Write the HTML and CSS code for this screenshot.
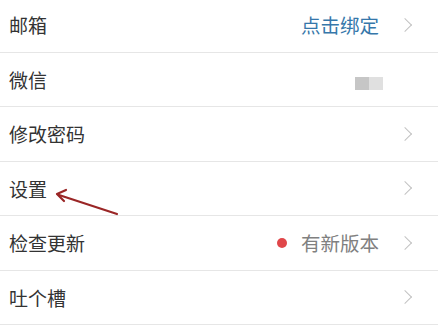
FILE: index.html
```html
<!DOCTYPE html>
<html lang="zh-CN">
<head>
<meta charset="utf-8">
<link rel="stylesheet" href="styles.css">
</head>
<body>
<div class="list">
  <div class="row">
    <span class="label">邮箱</span>
    <span class="value link">点击绑定</span>
    <span class="chev"></span>
  </div>
  <div class="row">
    <span class="label">微信</span>
    <span class="blur"><i class="b1"></i><i class="b2"></i></span>
    <span class="chev-space"></span>
  </div>
  <div class="row">
    <span class="label">修改密码</span>
    <span class="chev"></span>
  </div>
  <div class="row">
    <span class="label">设置</span>
    <span class="chev"></span>
  </div>
  <div class="row">
    <span class="label">检查更新</span>
    <span class="dot"></span>
    <span class="value muted">有新版本</span>
    <span class="chev"></span>
  </div>
  <div class="row">
    <span class="label">吐个槽</span>
    <span class="chev"></span>
  </div>
  <svg class="arrow" width="80" height="40" viewBox="0 0 80 40">
    <line x1="72" y1="34" x2="14" y2="15" stroke="#9a2626" stroke-width="2.2" stroke-linecap="round"/>
    <polyline points="21,10 12,14 19,21" fill="none" stroke="#9a2626" stroke-width="2.2" stroke-linecap="round" stroke-linejoin="round"/>
  </svg>
</div>
</body>
</html>
```
FILE: styles.css
```css
html, body {
  margin: 0;
  padding: 0;
  background: #ffffff;
}
body {
  font-family: "Noto Sans CJK SC", "Noto Sans", sans-serif;
  width: 438px;
  height: 327px;
  overflow: hidden;
}
.list {
  position: relative;
  margin-top: -2px;
}
.row {
  display: flex;
  align-items: center;
  height: 53.5px;
  border-bottom: 1.5px solid #e6e6e6;
  padding: 0 27px 0 9px;
  box-sizing: content-box;
}
.label {
  flex: 1;
  font-size: 19px;
  color: #333333;
  line-height: 1;
}
.value {
  font-size: 19.5px;
  line-height: 1;
  margin-right: 24px;
}
.link { color: #3677aa; }
.muted { color: #808080; }
.chev {
  width: 8px;
  height: 14px;
  position: relative;
}
.chev::before {
  content: "";
  position: absolute;
  left: -3px;
  top: 2px;
  width: 9px;
  height: 9px;
  border-top: 1.5px solid #c2c2c2;
  border-right: 1.5px solid #c2c2c2;
  transform: rotate(45deg);
}
.chev-space { width: 8px; }
.blur {
  display: flex;
  margin-right: 20px;
  margin-top: 8px;
  filter: blur(0.6px);
}
.blur i {
  display: block;
  width: 14px;
  height: 13px;
}
.b1 { background: #c6c6c6; }
.b2 { background: #e0e0e0; }
.dot {
  width: 10px;
  height: 10px;
  border-radius: 50%;
  background: #e0474a;
  margin-right: 14px;
}
.arrow {
  position: absolute;
  left: 45px;
  top: 182px;
}
```
